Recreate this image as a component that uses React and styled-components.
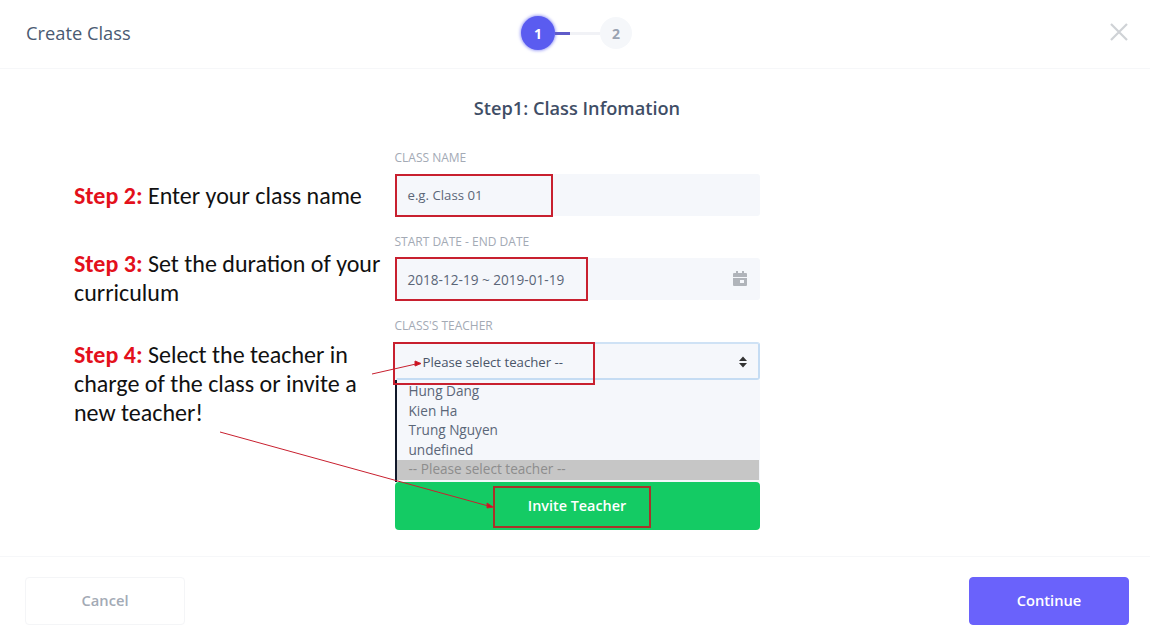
import React from 'react'
import styled, { createGlobalStyle } from 'styled-components'

const GlobalStyle = createGlobalStyle`
  html, body { margin: 0; padding: 0; background: #fff; }
  body { font-family: "Open Sans", "Liberation Sans", sans-serif; }
  * { box-sizing: border-box; }
`

const Page = styled.div`
  position: relative;
  width: 1150px;
  height: 636px;
  display: flex;
  flex-direction: column;
  overflow: hidden;
  background: #fff;
`

const Header = styled.header`
  height: 69px;
  flex: none;
  display: grid;
  grid-template-columns: 1fr auto 1fr;
  align-items: center;
  padding: 0 20px 2px 26px;
  border-bottom: 1px solid #f6f7f9;
`

const Heading = styled.h1`
  margin: 0 0 2px;
  font-size: 18.3px;
  font-weight: 400;
  color: #4a5a72;
`

const Stepper = styled.div`
  display: flex;
  align-items: center;
  margin-left: -3px;
`

const StepDot = styled.div`
  width: ${p => (p.$active ? 34 : 32)}px;
  height: ${p => (p.$active ? 34 : 32)}px;
  border-radius: 50%;
  display: flex;
  align-items: center;
  justify-content: center;
  font-size: 14px;
  font-weight: 700;
  color: ${p => (p.$active ? '#fff' : '#9aa3b2')};
  background: ${p => (p.$active ? '#5a5cf0' : '#f5f7fa')};
  box-shadow: ${p => (p.$active ? '0 0 3px 1px rgba(90, 92, 240, .55)' : 'none')};
`

const StepLine = styled.div`
  width: 45px;
  height: 3px;
  background: linear-gradient(to right, #5f5bc9 0 15px, #f1f2f6 15px);
`

const CloseButton = styled.button`
  justify-self: end;
  margin-bottom: 2px;
  padding: 0;
  border: 0;
  background: none;
  line-height: 0;
  color: #cfd2d6;
`

const Body = styled.main`
  flex: 1;
  display: flex;
  flex-direction: column;
  align-items: center;
  padding-top: 27px;
  padding-left: 4px;
`

const StepTitle = styled.h2`
  margin: 0 0 28px;
  font-size: 18.2px;
  line-height: 24px;
  font-weight: 600;
  color: #3f4e66;
`

const Form = styled.form`
  width: 365px;
  display: flex;
  flex-direction: column;
`

const Label = styled.label`
  display: block;
  height: 26px;
  margin-top: ${p => (p.$first ? 0 : 16)}px;
  font-size: 12px;
  line-height: 20px;
  color: #a3aab5;
  text-transform: uppercase;
`

const Control = styled.div`
  position: relative;
  height: ${p => p.$height || 42}px;
  display: flex;
  align-items: center;
  justify-content: space-between;
  padding: 0 12px 0 13px;
  font-size: ${p => p.$size || 13.2}px;
  color: #5b6678;
  background: #f5f7fb;
  border-radius: 3px;
`

const SelectBox = styled(Control)`
  padding: 1px 10px 0 26px;
  color: #4a5568;
  border: 2px solid #c5dcf3;
  border-left-color: #f5f7fb;
  border-top-color: #cfe2f5;
`

const Highlight = styled.span`
  position: absolute;
  left: ${p => p.$left || 0}px;
  top: ${p => p.$top ?? -1}px;
  width: ${p => p.$width}px;
  height: ${p => p.$boxHeight}px;
  border: 2px solid ${p => p.$color || '#c8202f'};
  pointer-events: none;
`

const OptionList = styled.ul`
  list-style: none;
  margin: 0;
  padding: 2px 1px 1px 0;
  height: 102px;
  font-size: 13.6px;
  color: #5b6678;
  background: #f5f7fb;
  border-left: 2px solid #10182a;
`

const Option = styled.li`
  height: 19.6px;
  line-height: 17.6px;
  padding-left: 12px;
  background: ${p => (p.$selected ? '#c6c6c6' : 'transparent')};
  color: ${p => (p.$selected ? '#8d8d8d' : 'inherit')};
`

const InviteButton = styled.button`
  position: relative;
  height: 48px;
  padding: 0 0 2px;
  border: 0;
  border-radius: 4px;
  background: #14cb64;
  color: #fff;
  font-family: inherit;
  font-size: 14.4px;
  font-weight: 600;
`

const Footer = styled.footer`
  height: 80px;
  flex: none;
  display: flex;
  justify-content: space-between;
  align-items: flex-start;
  padding: 20px 21px 0 25px;
  border-top: 1px solid #f6f7f9;
`

const FooterButton = styled.button`
  width: 160px;
  height: 48px;
  padding: 0 0 2px;
  border-radius: 4px;
  border: 1px solid ${p => (p.$primary ? '#6a62fb' : '#f4f5f7')};
  background: ${p => (p.$primary ? '#6a62fb' : '#fff')};
  color: ${p => (p.$primary ? '#fff' : '#a3aab5')};
  font-family: inherit;
  font-size: 14.7px;
  font-weight: 600;
`

const Callout = styled.p`
  position: absolute;
  left: ${p => p.$left}px;
  top: ${p => p.$top}px;
  width: 318px;
  margin: 0;
  font-family: Carlito, Lato, "Liberation Sans", sans-serif;
  font-size: 24px;
  line-height: 29px;
  color: #111;
`

const StepTag = styled.strong`
  color: #e3101b;
  font-weight: 700;
`

const Arrows = styled.svg`
  position: absolute;
  left: 0;
  top: 0;
  pointer-events: none;
`

const App = () => (
  <Page>
    <GlobalStyle />
    <Header>
      <Heading>Create Class</Heading>
      <Stepper>
        <StepDot $active>1</StepDot>
        <StepLine />
        <StepDot>2</StepDot>
      </Stepper>
      <CloseButton type="button" aria-label="Close">
        <svg width="22" height="22" viewBox="0 0 22 22" fill="none" stroke="currentColor" strokeWidth="2.2">
          <path d="M3 3l16 16M19 3L3 19" />
        </svg>
      </CloseButton>
    </Header>

    <Body>
      <StepTitle>Step1: Class Infomation</StepTitle>
      <Form>
        <Label $first>Class name</Label>
        <Control>
          e.g. Class 01
          <Highlight $top={0} $width={158} $boxHeight={43} />
        </Control>

        <Label>Start date - End date</Label>
        <Control $size={13.6}>
          2018-12-19 ~ 2019-01-19
          <svg width="16" height="16" viewBox="0 0 16 16" fill="#b0b4ba">
            <path d="M4 0h2v2h4V0h2v2h2a1 1 0 0 1 1 1v3H1V3a1 1 0 0 1 1-1h2zM1 7h14v7a1 1 0 0 1-1 1H2a1 1 0 0 1-1-1zm7 2v3h4V9z" />
          </svg>
          <Highlight $width={193} $boxHeight={44} />
        </Control>

        <Label>Class's teacher</Label>
        <SelectBox $height={38}>
          Please select teacher --
          <svg width="10" height="14" viewBox="0 0 10 14" fill="#333">
            <path d="M5 1.5L9 6H1zM5 12.5L1 8h8z" />
          </svg>
          <Highlight $left={-4} $top={-2} $width={202} $boxHeight={43} />
        </SelectBox>
        <OptionList>
          <Option>Hung Dang</Option>
          <Option>Kien Ha</Option>
          <Option>Trung Nguyen</Option>
          <Option>undefined</Option>
          <Option $selected>-- Please select teacher --</Option>
        </OptionList>
        <InviteButton type="button">
          Invite Teacher
          <Highlight $left={98} $top={4} $width={158} $boxHeight={42} $color="#a8322a" />
        </InviteButton>
      </Form>
    </Body>

    <Footer>
      <FooterButton type="button">Cancel</FooterButton>
      <FooterButton type="button" $primary>Continue</FooterButton>
    </Footer>

    <Callout $left={74} $top={181}><StepTag>Step 2:</StepTag> Enter your class name</Callout>
    <Callout $left={74} $top={249}><StepTag>Step 3:</StepTag> Set the duration of your<br />curriculum</Callout>
    <Callout $left={74} $top={340}><StepTag>Step 4:</StepTag> Select the teacher in<br />charge of the class or invite a<br />new teacher!</Callout>

    <Arrows width="1150" height="636" viewBox="0 0 1150 636" fill="none" stroke="#c8202f" strokeWidth="1">
      <path d="M372 374l44-10" />
      <path d="M220 432l272 75" />
      <path d="M421 363.500l-6-2.500v5zM493 507l-6-4v5z" fill="#d0101c" />
    </Arrows>
  </Page>
)

export default App
